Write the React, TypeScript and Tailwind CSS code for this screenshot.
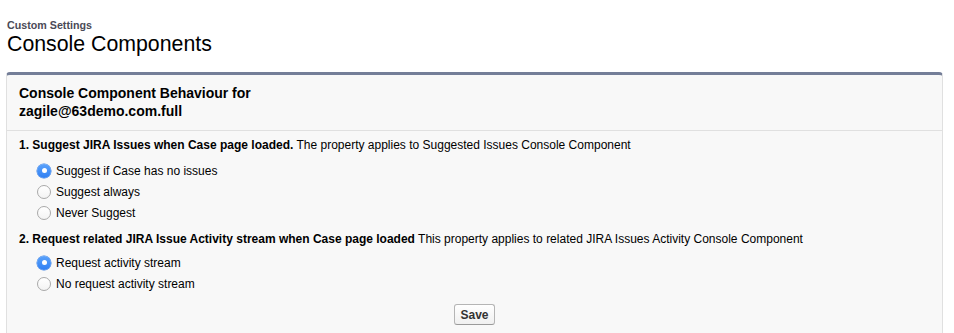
const font = { fontFamily: '"Liberation Sans", Arial, Helvetica, sans-serif' };

interface Option {
  label: string;
  checked?: boolean;
}

interface Setting {
  num: number;
  title: string;
  note: string;
  options: Option[];
}

const settings: Setting[] = [
  {
    num: 1,
    title: 'Suggest JIRA Issues when Case page loaded.',
    note: 'The property applies to Suggested Issues Console Component',
    options: [
      { label: 'Suggest if Case has no issues', checked: true },
      { label: 'Suggest always' },
      { label: 'Never Suggest' },
    ],
  },
  {
    num: 2,
    title: 'Request related JIRA Issue Activity stream when Case page loaded',
    note: 'This property applies to related JIRA Issues Activity Console Component',
    options: [{ label: 'Request activity stream', checked: true }, { label: 'No request activity stream' }],
  },
];

function Radio({ checked }: { checked?: boolean }) {
  if (checked) {
    return (
      <span className="flex h-[14px] w-[14px] items-center justify-center rounded-full bg-gradient-to-b from-[#5aa2fb] to-[#2f7ff3] shadow-[0_0_0_0.5px_#2f78e0]">
        <span className="h-[5px] w-[5px] rounded-full bg-white" />
      </span>
    );
  }
  return (
    <span className="h-[14px] w-[14px] rounded-full border border-[#a9a9a9] bg-gradient-to-b from-white to-[#f3f3f3]" />
  );
}

export default function App() {
  return (
    <div className="min-h-screen bg-white pl-[6px] pr-[11px] text-black" style={font}>
      <div className="pt-[19px] text-[10.7px] font-bold leading-[13px] text-[#4a4a56] pl-px">Custom Settings</div>
      <h1 className="text-[21.3px] leading-[24px] text-black pl-px">Console Components</h1>

      <div className="mt-[16px] rounded-t-[4px] border border-t-[3px] border-[#e0e0e0] border-t-[#747e98] bg-[#f8f8f8]">
        <div className="px-[12px] pt-[9px] pb-[10px] text-[14px] font-bold leading-[18px]">
          Console Component Behaviour for
          <br />
          zagile@63demo.com.full
        </div>
        <div className="h-px bg-[#e0e0e0]" />

        <div className="px-[12px] pt-[6px] pb-[24px] text-[12px] leading-[16px]">
          {settings.map((s, i) => (
            <div key={s.num} className={i > 0 ? 'mt-[8px]' : ''}>
              <p>
                <span className="font-bold">
                  {s.num}. {s.title}
                </span>{' '}
                {s.note}
              </p>
              <div className={i === 0 ? 'mt-[7px]' : 'mt-[5px]'}>
                {s.options.map((o) => (
                  <label key={o.label} className="flex h-[21px] items-center gap-[5px] pl-[18px]">
                    <Radio checked={o.checked} />
                    <span>{o.label}</span>
                  </label>
                ))}
              </div>
            </div>
          ))}
          <div className="mt-[10px] flex justify-center">
            <button className="h-[21px] rounded-[3px] border border-[#b5b5b5] border-b-[#9a9a9a] bg-gradient-to-b from-white to-[#f0f0f0] px-[5px] text-[12px] font-bold text-[#333]">
              Save
            </button>
          </div>
        </div>
      </div>
    </div>
  );
}
